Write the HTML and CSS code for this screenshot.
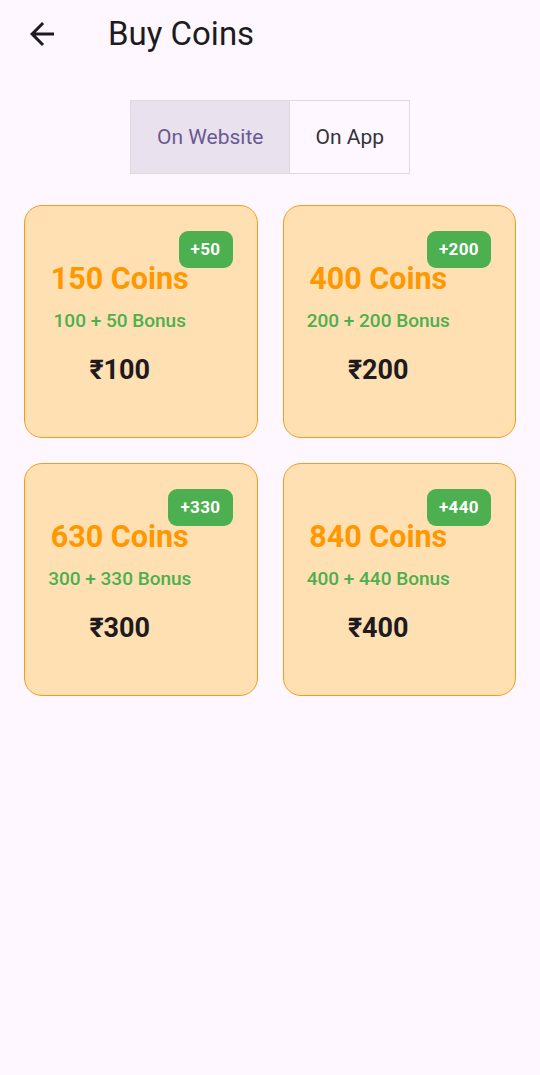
FILE: index.html
```html
<!DOCTYPE html>
<html lang="en">
<head>
    <meta charset="UTF-8">
    <meta name="viewport" content="width=device-width, initial-scale=1.0">
    <title>Buy Coins</title>
    <link rel="stylesheet" href="styles.css">
</head>
<body>

    <header class="app-bar">
        <button class="back-btn" aria-label="Back">
            <svg viewBox="0 0 24 24" width="36" height="36">
                <path d="M20 11H7.83l5.59-5.59L12 4l-8 8 8 8 1.41-1.41L7.83 13H20v-2z" fill="#1d1b20"/>
            </svg>
        </button>
        <h1 class="title">Buy Coins</h1>
    </header>

    <div class="toggle-wrap">
        <div class="toggle">
            <button class="toggle-btn active">On Website</button>
            <button class="toggle-btn">On App</button>
        </div>
    </div>

    <div class="packs">
        <div class="pack">
            <span class="badge">+50</span>
            <div class="coins">150 Coins</div>
            <div class="bonus">100 + 50 Bonus</div>
            <div class="price">₹100</div>
        </div>
        <div class="pack">
            <span class="badge">+200</span>
            <div class="coins">400 Coins</div>
            <div class="bonus">200 + 200 Bonus</div>
            <div class="price">₹200</div>
        </div>
        <div class="pack">
            <span class="badge">+330</span>
            <div class="coins">630 Coins</div>
            <div class="bonus">300 + 330 Bonus</div>
            <div class="price">₹300</div>
        </div>
        <div class="pack">
            <span class="badge">+440</span>
            <div class="coins">840 Coins</div>
            <div class="bonus">400 + 440 Bonus</div>
            <div class="price">₹400</div>
        </div>
    </div>

</body>
</html>
```

FILE: styles.css
```css
body {
    font-family: Roboto, "Noto Sans", sans-serif;
    background-color: #fef7ff;
    color: #1d1b20;
    margin: 0;
}
.app-bar {
    height: 67px;
    display: flex;
    align-items: center;
    padding-left: 24px;
}
.back-btn {
    width: 36px;
    height: 36px;
    padding: 0;
    border: none;
    background: none;
    display: flex;
}
.title {
    margin: 0 0 0 48px;
    font-size: 33px;
    font-weight: 400;
    color: #1d1b20;
}
.toggle-wrap {
    margin-top: 33px;
    display: flex;
    justify-content: center;
}
.toggle {
    display: flex;
    border: 1px solid #dedae0;
}
.toggle-btn {
    height: 72px;
    padding: 0 25px;
    border: none;
    background: #fef7ff;
    font-family: Roboto, sans-serif;
    font-size: 21px;
    color: #35323a;
}
.toggle-btn + .toggle-btn {
    border-left: 1px solid #dedae0;
}
.toggle-btn.active {
    background-color: #e9e1ee;
    color: #6a5a92;
    padding: 0 26px;
}
.packs {
    margin-top: 31px;
    padding: 0 24px;
    display: grid;
    grid-template-columns: 1fr 1fr;
    gap: 25px;
}
.pack {
    position: relative;
    height: 233px;
    box-sizing: border-box;
    border: 1px solid #f59c1c;
    border-radius: 18px;
    background-color: #ffe0b2;
    display: flex;
    flex-direction: column;
    justify-content: center;
    align-items: center;
    padding: 18px 58px 14px 16px;
}
.badge {
    position: absolute;
    top: 25px;
    right: 24px;
    height: 37px;
    padding: 0 12px;
    border-radius: 9px;
    background-color: #4caf50;
    color: #fff;
    font-size: 17px;
    font-weight: 700;
    line-height: 37px;
    letter-spacing: 0.4px;
}
.coins {
    font-size: 30.5px;
    font-weight: 700;
    color: #ff9800;
    white-space: nowrap;
}
.bonus {
    margin-top: 13px;
    font-size: 19px;
    font-weight: 500;
    color: #4caf50;
    white-space: nowrap;
}
.price {
    margin-top: 22px;
    font-size: 27px;
    font-weight: 700;
    color: #1d1b20;
}
```
